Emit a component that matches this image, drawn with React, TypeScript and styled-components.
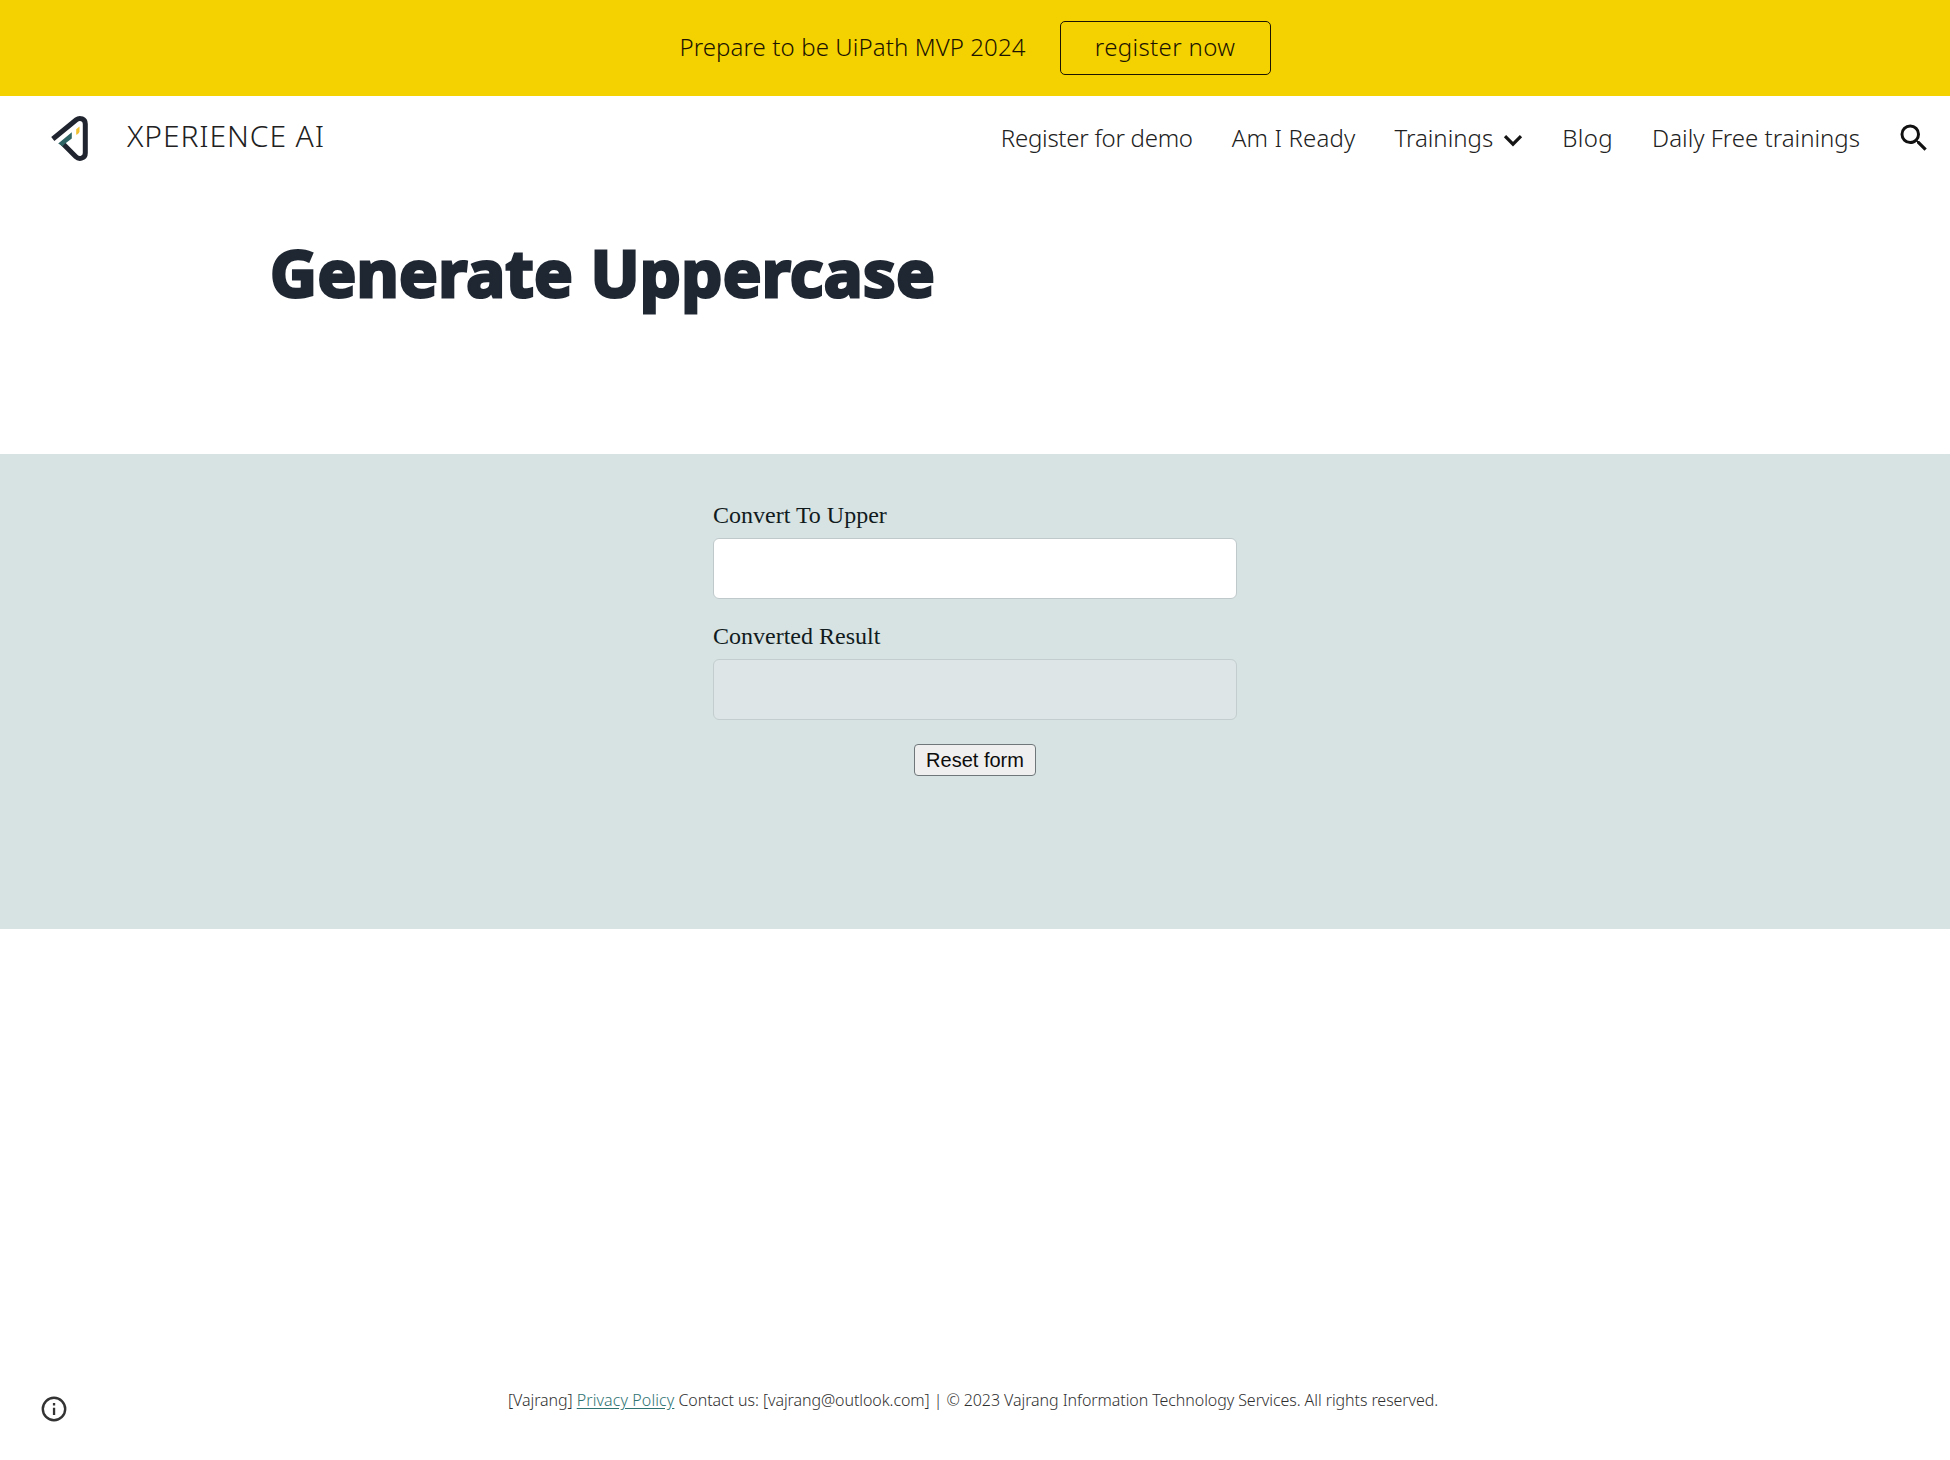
import React, { useState } from "react";
import styled, { createGlobalStyle } from "styled-components";

const GlobalStyle = createGlobalStyle`
  *, *::before, *::after { box-sizing: border-box; }
  body {
    margin: 0;
    background: #fff;
    font-family: "Noto Sans", sans-serif;
    font-weight: 300;
    color: #212121;
  }
`;

const Page = styled.div`
  display: flex;
  flex-direction: column;
  height: 1460px;
  overflow: hidden;
`;

const Banner = styled.div`
  display: flex;
  align-items: center;
  justify-content: center;
  gap: 34px;
  height: 96px;
  background: #f4d202;
  color: #1c1400;
  font-size: 24px;
`;

const BannerText = styled.span`
  line-height: 32px;
  padding-bottom: 2px;
  letter-spacing: 0.1px;
`;

const BannerButton = styled.a`
  display: flex;
  justify-content: center;
  width: 211px;
  height: 54px;
  padding-top: 9px;
  border: 1px solid #1c1400;
  border-radius: 5px;
  line-height: 32px;
  letter-spacing: 0.35px;
`;

const Header = styled.header`
  display: flex;
  align-items: center;
  height: 84px;
  padding: 0 18px 0 50px;
`;

const Brand = styled.a`
  display: flex;
  align-items: center;
  gap: 37px;
`;

const BrandName = styled.span`
  font-size: 30px;
  line-height: 40px;
  padding-bottom: 4px;
  letter-spacing: 0.9px;
`;

const Nav = styled.nav`
  display: flex;
  align-items: center;
  gap: 39px;
  margin-left: auto;
  margin-right: 36px;
`;

const NavLink = styled.a<{ $tracking?: number }>`
  display: flex;
  align-items: center;
  gap: 10px;
  font-size: 24px;
  line-height: 32px;
  white-space: nowrap;
  letter-spacing: ${(p) => p.$tracking ?? 0}px;

  svg { margin-top: 4px; }
`;

const TitleSection = styled.section`
  height: 274px;
  padding: 52px 0 0 270px;
`;

const Title = styled.h1`
  margin: 0;
  color: #1f2733;
  font-size: 65px;
  line-height: 80px;
  font-weight: 700;
  letter-spacing: 0.32px;
  -webkit-text-stroke: 3px #1f2733;
  stroke-linejoin: round;
`;

const FormSection = styled.section`
  display: flex;
  justify-content: center;
  height: 475px;
  padding-top: 46px;
  background: #d7e3e2;
`;

const Form = styled.form`
  display: flex;
  flex-direction: column;
  gap: 22px;
  width: 524px;
`;

const Field = styled.label`
  display: flex;
  flex-direction: column;
  gap: 8px;
  font: 400 24px/30px "Liberation Serif", serif;
  color: #111b1e;
`;

const Input = styled.input`
  width: 100%;
  height: 61px;
  padding: 8px 18px;
  border: 1px solid #bfc9cc;
  border-radius: 6px;
  background: #fff;
  font: 400 24px "Liberation Serif", serif;
  outline: none;

  &:disabled { background: #dde5e6; border-color: #c3cdcf; }
`;

const ResetButton = styled.button`
  align-self: center;
  width: 122px;
  height: 32px;
  margin-top: 2px;
  padding: 0;
  border: 1px solid #70777a;
  border-radius: 4px;
  background: #efefef;
  color: #0c0c0c;
  font: 400 20px/28px "Liberation Sans", sans-serif;
`;

const Footer = styled.footer`
  display: flex;
  align-items: flex-end;
  flex: 1;
  padding: 0 0 37px 40px;
`;

const InfoButton = styled.span`
  display: flex;
  width: 28px;
  height: 28px;
`;

const FooterText = styled.p`
  margin: 0 0 13px 440px;
  font-size: 16px;
  line-height: 20px;
  white-space: nowrap;
  letter-spacing: -0.07px;
  color: #303030;
`;

const PolicyLink = styled.a`
  color: #2f7373;
  text-decoration: underline;
  text-underline-offset: 2px;
  letter-spacing: 0.1px;
`;

const Logo = () => (
  <svg width="40" height="48" viewBox="0 0 40 48" fill="none">
    <path d="M2.800 25 26.300 5.700c3.500-2.700 9-.8 9 4.200v29c0 5.100-5.900 7.200-9.400 3.800L11.700 28.400" stroke="#20242f" strokeWidth="5" />
    <path d="M8.200 29.400 21.800 18.200v6.200l-7.200 5.700-2 2.200z" fill="#2f6465" />
    <path d="M26.200 15.200 29.500 12.600v4.700c0 1.500-1.400 3-3.300 3.400z" fill="#f2c12f" />
  </svg>
);

const Chevron = () => (
  <svg width="20" height="13" viewBox="0 0 20 13" fill="none">
    <path d="M2 2.200 10 10.200 18 2.200" stroke="#151515" strokeWidth="3.200" />
  </svg>
);

const SearchIcon = () => (
  <svg width="36" height="36" viewBox="0 0 24 24" fill="#111">
    <path d="M15.500 14h-.79l-.28-.27A6.471 6.471 0 0 0 16 9.500 6.500 6.500 0 1 0 9.500 16c1.610 0 3.090-.59 4.230-1.570l.27.28v.79l5 4.990L20.490 19l-4.990-5zm-6 0C7.010 14 5 11.990 5 9.500S7.010 5 9.500 5 14 7.010 14 9.500 11.990 14 9.500 14z" />
  </svg>
);

const InfoIcon = () => (
  <svg width="28" height="28" viewBox="0 0 28 28" fill="none">
    <circle cx="14" cy="14" r="11.200" stroke="#333" strokeWidth="2.400" />
    <path d="M12.900 12.700h2.300v7.300h-2.300zM12.900 8h2.300v2.500h-2.300z" fill="#333" />
  </svg>
);

export default function App() {
  const [text, setText] = useState("");

  return (
    <Page>
      <GlobalStyle />
      <Banner>
        <BannerText>Prepare to be UiPath MVP 2024</BannerText>
        <BannerButton>register now</BannerButton>
      </Banner>
      <Header>
        <Brand>
          <Logo />
          <BrandName>XPERIENCE AI</BrandName>
        </Brand>
        <Nav>
          <NavLink $tracking={-0.27}>Register for demo</NavLink>
          <NavLink $tracking={0.15}>Am I Ready</NavLink>
          <NavLink>
            Trainings
            <Chevron />
          </NavLink>
          <NavLink $tracking={0.4}>Blog</NavLink>
          <NavLink>Daily Free trainings</NavLink>
        </Nav>
        <SearchIcon />
      </Header>
      <TitleSection>
        <Title>Generate Uppercase</Title>
      </TitleSection>
      <FormSection>
        <Form onReset={() => setText("")}>
          <Field>
            Convert To Upper
            <Input value={text} onChange={(e) => setText(e.target.value)} />
          </Field>
          <Field>
            Converted Result
            <Input value={text.toUpperCase()} disabled />
          </Field>
          <ResetButton type="reset">Reset form</ResetButton>
        </Form>
      </FormSection>
      <Footer>
        <InfoButton>
          <InfoIcon />
        </InfoButton>
        <FooterText>
          [Vajrang] <PolicyLink>Privacy Policy</PolicyLink> Contact us: [vajrang@outlook.com] | © 2023 Vajrang
          Information Technology Services. All rights reserved.
        </FooterText>
      </Footer>
    </Page>
  );
}
